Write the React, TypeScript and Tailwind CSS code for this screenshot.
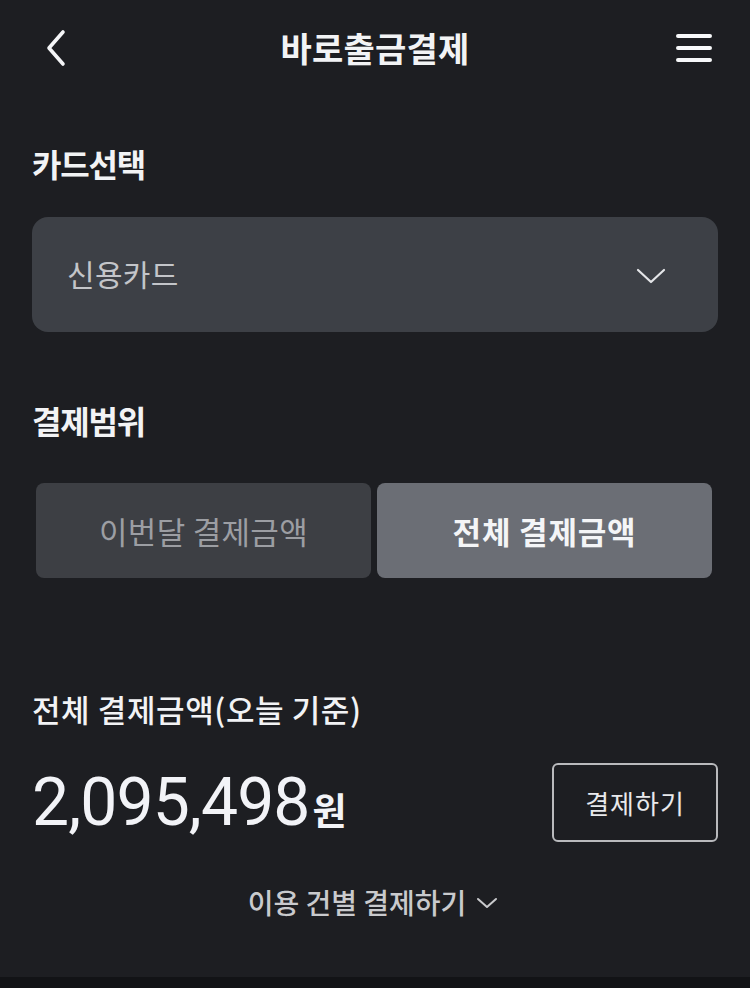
import React from "react";

const KR = { fontFamily: '"Noto Sans CJK KR", "Noto Sans", sans-serif' };
const NUM = { fontFamily: 'Roboto, "Noto Sans CJK KR", sans-serif' };

export default function App() {
  return (
    <div className="min-h-[988px] w-[750px] bg-[#1d1e22] flex flex-col" style={KR}>
      <div className="flex-1 flex flex-col">
        {/* Header */}
        <div className="h-[96px] grid grid-cols-[1fr_auto_1fr] items-center px-[38px]">
          <div className="flex items-center">
            <svg width="30" height="40" viewBox="0 0 30 40" className="ml-[3px]">
              <path d="M22 4 L8 20 L22 36" fill="none" stroke="#f4f5f7" strokeWidth="3.6" strokeLinecap="round" strokeLinejoin="round" />
            </svg>
          </div>
          <div className="text-[34px] leading-[40px] font-bold text-[#f2f3f5] tracking-[0.2px]">바로출금결제</div>
          <div className="flex justify-end">
            <svg width="36" height="30" viewBox="0 0 36 30">
              <path d="M2 3 H34 M2 15 H34 M2 27 H34" stroke="#f7f8fa" strokeWidth="4" strokeLinecap="round" />
            </svg>
          </div>
        </div>

        <div className="px-[32px] flex flex-col">
          <div className="mt-[47px] text-[32px] leading-[40px] font-bold text-[#f2f3f5] tracking-[-1.2px]">카드선택</div>

          <div className="mt-[34px] h-[115px] rounded-[16px] bg-[#3d4046] flex items-center justify-between pl-[35px] pr-[52px]">
            <span className="text-[30px] leading-[36px] text-[#c3c5c9] tracking-[0.3px] -mt-[4px]">신용카드</span>
            <svg width="30" height="18" viewBox="0 0 30 18" className="mt-[2px]">
              <path d="M2 3 L15 15 L28 3" fill="none" stroke="#e4e5e8" strokeWidth="2.2" strokeLinecap="round" strokeLinejoin="round" />
            </svg>
          </div>

          <div className="mt-[68px] text-[32px] leading-[40px] font-bold text-[#f2f3f5] tracking-[-1.2px]">결제범위</div>

          <div className="mt-[43px] ml-[4px] mr-[6px] grid grid-cols-2 gap-[6px]">
            <div className="h-[95px] rounded-[8px] bg-[#3d3f44] flex items-center justify-center">
              <span className="text-[31px] leading-[36px] text-[#9c9ea3] tracking-[0.3px]">이번달 결제금액</span>
            </div>
            <div className="h-[95px] rounded-[8px] bg-[#6b6e75] flex items-center justify-center">
              <span className="text-[31px] leading-[36px] font-bold text-[#f4f5f7] tracking-[0.8px]">전체 결제금액</span>
            </div>
          </div>

          <div className="mt-[111px] text-[31px] leading-[40px] font-medium text-[#f2f3f5] tracking-[0.6px]">전체 결제금액(오늘 기준)</div>

          <div className="mt-[34px] flex items-center justify-between">
            <div className="flex items-baseline">
              <span className="text-[66px] leading-[72px] font-normal text-[#f2f3f7] tracking-[-0.9px]" style={NUM}>2,095,498</span>
              <span className="ml-[3px] text-[37px] leading-[40px] font-bold text-[#f2f3f7]">원</span>
            </div>
            <div className="w-[166px] h-[79px] rounded-[6px] border-2 border-[#b9babd] flex items-center justify-center">
              <span className="text-[26px] leading-[32px] text-[#e8e9ec] tracking-[1px]">결제하기</span>
            </div>
          </div>

          <div className="mt-[42px] flex items-center justify-center pr-[4px]">
            <span className="text-[28px] leading-[36px] font-medium text-[#c9cacd] tracking-[0px]">이용 건별 결제하기</span>
            <svg width="22" height="14" viewBox="0 0 22 14" className="ml-[10px] mt-[2px]">
              <path d="M2 3 L11 11 L20 3" fill="none" stroke="#c9cacd" strokeWidth="2" strokeLinecap="round" strokeLinejoin="round" />
            </svg>
          </div>
        </div>
      </div>
      <div className="h-[11px] bg-[#121316]" />
    </div>
  );
}
